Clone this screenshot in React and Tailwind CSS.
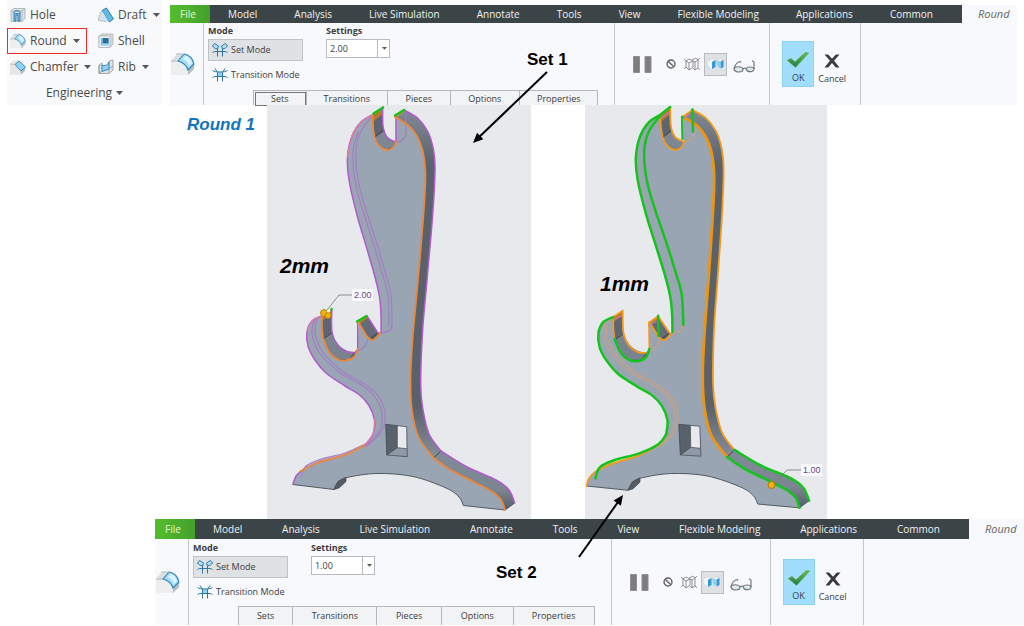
import { useId } from 'react';
import clsx from 'clsx';

const MENU = [
    'Model',
    'Analysis',
    'Live Simulation',
    'Annotate',
    'Tools',
    'View',
    'Flexible Modeling',
    'Applications',
    'Common',
];

const PANELS = ['Sets', 'Transitions', 'Pieces', 'Options', 'Properties'];

/* ---------- icons ---------- */

function Caret({ className = 'w-[7px]' }) {
    return (
        <svg viewBox="0 0 7 4" className={clsx('shrink-0', className)} aria-hidden="true">
            <path d="M0 0h7L3.5 4z" fill="#555" />
        </svg>
    );
}

function HoleIcon() {
    return (
        <svg viewBox="0 0 16 16" className="w-4 h-4 shrink-0" aria-hidden="true">
            <path d="M1 4l3-2.500h11v10l-3 3H1z" fill="#dfe3e6" stroke="#a3abb1" strokeWidth=".8" />
            <path d="M1 4h11v10.500M12 4l3-2.500" fill="none" stroke="#a3abb1" strokeWidth=".8" />
            <path d="M4 5.500c0-2 6-2 6 0V14H8V8H6v6H4z" fill="#7cc4ea" stroke="#2474a5" strokeWidth=".9" />
            <ellipse cx="7" cy="5.300" rx="3" ry="1.300" fill="#d9f1fc" stroke="#2474a5" strokeWidth=".8" />
        </svg>
    );
}

function RoundIcon({ className = 'w-4 h-4' }) {
    return (
        <svg viewBox="0 0 24 24" className={clsx('shrink-0', className)} aria-hidden="true">
            <path d="M0 9l6-7h7c5 1 9 5 10 10v5l-6 6v-5C16 13 12 10 8 9z" fill="#dcdfe2" />
            <path d="M0 9h7c5 1 9 5 10 9v5H0z" fill="#eceeef" />
            <path d="M17 18l6-6v5l-6 6z" fill="#b9bec2" />
            <path d="M7 9l6-7c5 1 9 5 10 10l-6 6c-1-4-5-8-10-9z" fill="#a5dcf8" stroke="#2a82b5" strokeWidth="1.100" />
            <path d="M12 7l3-3.500c3 1.500 5 4 6 7.500l-3 3c-1-3-3-5.500-6-7z" fill="#d9f3ff" />
            <path d="M0 9h7M5 2h8" stroke="#b4babe" strokeWidth="1" />
        </svg>
    );
}

function ChamferIcon() {
    return (
        <svg viewBox="0 0 16 16" className="w-4 h-4 shrink-0" aria-hidden="true">
            <path d="M0 5l4-3.500h4l7 7V12l-4 3.500H0z" fill="#e3e5e7" />
            <path d="M11 12l4-4v4l-4 3.500z" fill="#b5babd" />
            <path d="M5 5.500L9 2l6.500 6L11 12z" fill="#8ed2f5" stroke="#2a82b5" strokeWidth=".9" />
            <path d="M0 5l5 .5" stroke="#b0b6ba" strokeWidth=".8" />
        </svg>
    );
}

function DraftIcon() {
    return (
        <svg viewBox="0 0 16 16" className="w-4 h-4 shrink-0" aria-hidden="true">
            <path d="M0 13L3 5l4-2 4 9-3 2.500z" fill="#dfe3e6" stroke="#a3abb1" strokeWidth=".8" />
            <path d="M4 3.500L8.500 1l7 11-4.500 3z" fill="#62b9e8" stroke="#2474a5" strokeWidth=".9" />
            <path d="M4 3.500L11 15l-6-1.500z" fill="#bfe6f9" />
        </svg>
    );
}

function ShellIcon() {
    return (
        <svg viewBox="0 0 16 16" className="w-4 h-4 shrink-0" aria-hidden="true">
            <path d="M1 3l3-2h11v10l-3 3.500H1z" fill="#d3d7da" stroke="#b0b6ba" strokeWidth=".8" />
            <path d="M1 3h11v11.500H1z" fill="#eef0f1" stroke="#b0b6ba" strokeWidth=".8" />
            <path d="M3 5h7.500v7.500H3z" fill="#6db7df" />
            <path d="M5 5h5.500v5.500H5z" fill="#2b6d99" />
            <path d="M3 12.500l2-2h5.500v2z" fill="#9bd8f6" />
        </svg>
    );
}

function RibIcon() {
    return (
        <svg viewBox="0 0 16 16" className="w-4 h-4 shrink-0" aria-hidden="true">
            <path d="M1 6l3-2v6l7-1V2l4-1v10l-4 3.500H1z" fill="#dfe3e6" stroke="#8f999f" strokeWidth=".8" />
            <path d="M4 6c3 1.500 6 0 7-3v7l-7 2.500z" fill="#8ed2f5" stroke="#2a82b5" strokeWidth=".9" />
            <path d="M1 6v8.500L4 12M11 14.500V10l4-3" fill="none" stroke="#8f999f" strokeWidth=".8" />
        </svg>
    );
}

function SetModeIcon() {
    return (
        <svg viewBox="0 0 16 14" className="w-4 h-[14px] shrink-0" aria-hidden="true">
            <path d="M.5 3L2.500.500 6.500 3v4C3.500 6 1.500 5 .5 3zM15.500 3l-2-2.500-4 2.500v4c3-1 5-2 6-4z" fill="#b5e2f8" />
            <path
                d="M2.500.5l4 2.500M.5 3C1.500 4.500 3 5.500 5.500 6v7.500M13.500.5l-4 2.500M15.500 3c-1 1.500-2.500 2.500-5 3v7.500M2.500.5L.5 3M13.500.5l2 2.500M6.500 3L5.500 6M9.500 3l1 3M.5 9.500C2 8.300 3.500 8.500 5.500 8.500h5c2 0 3.500-.2 5 1"
                fill="none"
                stroke="#2b76a3"
                strokeWidth="1"
            />
        </svg>
    );
}

function TransitionModeIcon() {
    return (
        <svg viewBox="0 0 16 14" className="w-4 h-[14px] shrink-0" aria-hidden="true">
            <path d="M5.500 4h5v4.500h-5z" fill="#8fd2f4" />
            <path
                d="M.5 2.500C3 4.500 13 4.500 15.500 2.500M3 .5l2.500 4v9M13 .5l-2.500 4v9M.5 9.500C2 8.300 3.500 8.500 5.500 8.500h5c2 0 3.500-.2 5 1"
                fill="none"
                stroke="#2b76a3"
                strokeWidth="1"
            />
        </svg>
    );
}

function PauseIcon() {
    return (
        <svg viewBox="0 0 19 17" className="w-[19px] h-[17px]" aria-hidden="true">
            <path d="M.5.5h6v16h-6zM12 .5h6v16h-6z" fill="#7d7d7d" stroke="#8f8f8f" />
        </svg>
    );
}

function NoPreviewIcon() {
    return (
        <svg viewBox="0 0 10 10" className="w-[10px] h-[10px]" aria-hidden="true">
            <circle cx="5" cy="5" r="4" fill="none" stroke="#5f5f5f" strokeWidth="1.300" />
            <path d="M2.200 2.200l5.600 5.600" stroke="#5f5f5f" strokeWidth="1.300" />
        </svg>
    );
}

function UnattachedIcon() {
    return (
        <svg viewBox="0 0 16 14" className="w-4 h-[14px]" aria-hidden="true">
            <path
                d="M2 4l3-2 4 2v6l-4 3-3-3zM2 4l3 2 4-2M5 6v7M8 3l4-2 2 2v8l-3 2-2-2M9 4l2 1 3-2M11 5v8M0 2l2 2M0 12l2-2M14 3l2-2M14 11l2 2"
                fill="none"
                stroke="#777"
                strokeWidth=".8"
            />
        </svg>
    );
}

function AttachedIcon() {
    return (
        <svg viewBox="0 0 16 12" className="w-4 h-3" aria-hidden="true">
            <path d="M0 2.500L4 1l3.500 1L4 4zM8.500 2.500L12 1l3.500 1-3 1.500z" fill="#fff" stroke="#b4c6d1" strokeWidth=".4" />
            <path d="M0 2.500L4 4v7L.5 8z" fill="#f4f8fa" />
            <path d="M4 4l3.500-2v7L4 11zM12.500 3.500L15.500 2v7l-3 1.500z" fill="#2f9bd8" />
            <path d="M8.500 2.500l4 1v7L9 8z" fill="#8bd0f3" />
        </svg>
    );
}

function GlassesIcon() {
    return (
        <svg viewBox="0 0 22 13" className="w-[22px] h-[13px]" aria-hidden="true">
            <g fill="#dceaf1" stroke="#777" strokeWidth="1.200">
                <path d="M1 9c0-3 8-3 9 0 0 4-8 4-9 0zM13 8.500c1-2 7-2 8 0 0 4-7 4.500-8 0z" />
                <path d="M10 9c1-1 2-1 3-.5M1 9C2 5 4 2 7 1.500l1 1M21 9V2l-2-1.200" fill="none" />
            </g>
        </svg>
    );
}

function CheckIcon() {
    const id = useId();
    return (
        <svg viewBox="0 0 22 16" className="w-[22px] h-4" aria-hidden="true">
            <defs>
                <linearGradient id={id} x1="0" y1="0" x2="0" y2="1">
                    <stop offset="0" stopColor="#6fc23c" />
                    <stop offset="1" stopColor="#1b7a4b" />
                </linearGradient>
            </defs>
            <path d="M.5 8.500L4 6.500 8 10 18 .8l3.500.2L8.500 15.300z" fill={`url(#${id})`} stroke="#3f8f3a" strokeWidth=".6" />
        </svg>
    );
}

function CrossIcon() {
    return (
        <svg viewBox="0 0 16 14" className="w-4 h-[14px]" aria-hidden="true">
            <path d="M.5.5h3.700L8 4.800 11.800.5h3.700L10 6.800l5.500 6.700h-3.700L8 9l-3.800 4.500H.5L6 6.800z" fill="#3a3a3a" />
        </svg>
    );
}

/* ---------- toolbox ---------- */

function Tool({ icon, label, caret, active }) {
    return (
        <button
            type="button"
            className={clsx(
                'flex h-[26px] items-center gap-1 border px-[2px] whitespace-nowrap',
                active ? 'border-[#ee2b2b]' : 'border-transparent'
            )}
        >
            {icon}
            <span>{label}</span>
            {caret && <Caret className="ml-[2px] w-[7px]" />}
        </button>
    );
}

function Toolbox() {
    return (
        <section className="w-[155px] shrink-0 bg-[#f7f9fb] pt-[2px] text-[12px] leading-4 text-[#4a4a4a]">
            <div className="flex gap-2">
                <div className="flex w-[80px] flex-col items-stretch">
                    <Tool icon={<HoleIcon />} label="Hole" />
                    <Tool icon={<RoundIcon />} label="Round" caret active />
                    <Tool icon={<ChamferIcon />} label="Chamfer" caret />
                </div>
                <div className="flex flex-col items-start">
                    <Tool icon={<DraftIcon />} label="Draft" caret />
                    <Tool icon={<ShellIcon />} label="Shell" />
                    <Tool icon={<RibIcon />} label="Rib" caret />
                </div>
            </div>
            <button type="button" className="mx-auto flex h-[25px] items-center gap-1">
                Engineering
                <Caret />
            </button>
        </section>
    );
}

/* ---------- ribbon ---------- */

function ModeButton({ icon, label, active }) {
    return (
        <button
            type="button"
            className={clsx(
                'flex h-[22px] w-full items-center gap-[3px] border px-[3px] whitespace-nowrap',
                active ? 'border-[#bfc3c6] bg-[#dfe2e4]' : 'border-transparent'
            )}
        >
            {icon}
            {label}
        </button>
    );
}

function Ribbon({ id, radius, focused, tall, className }) {
    return (
        <section className={clsx('bg-[#f8f9fc] text-[9px] leading-4 text-[#3c3c3c]', className)}>
            <nav className={clsx('flex items-stretch text-[10px]', tall ? 'h-5' : 'h-[18px]')}>
                <button type="button" className="w-10 bg-linear-to-r from-[#55bd2c] to-[#43a02c] pr-1 text-[#e8f5d8]">
                    File
                </button>
                <div className="flex flex-1 items-center justify-between bg-[#3b4446] pr-[29px] pl-[18px] text-[#f1f3f3]">
                    {MENU.map((item) => (
                        <button key={item} type="button" className="whitespace-nowrap">
                            {item}
                        </button>
                    ))}
                </div>
                <button type="button" className="w-[55px] pl-4 text-left text-[11px] text-[#666] italic">
                    Round
                </button>
            </nav>

            <div className="grid grid-cols-[34px_412fr_155fr_91fr_156fr] divide-x divide-[#c6c9cc]">
                <div className="flex items-center pl-px">
                    <RoundIcon className="h-6 w-6" />
                </div>

                <div className={clsx('flex flex-col', tall && 'pt-px')}>
                    <div className="flex gap-[23px] pl-1">
                        <div className="w-[95px]">
                            <h2 className="font-bold">Mode</h2>
                            <ModeButton icon={<SetModeIcon />} label="Set Mode" active />
                            <div className="mt-[3px]">
                                <ModeButton icon={<TransitionModeIcon />} label="Transition Mode" />
                            </div>
                        </div>
                        <div>
                            <label htmlFor={id} className="block font-bold">
                                Settings
                            </label>
                            <div className="relative w-16">
                                <select
                                    id={id}
                                    defaultValue={radius}
                                    className="block h-[19px] w-full appearance-none border border-[#b8bbbd] bg-white px-[3px] leading-4"
                                >
                                    <option>1.00</option>
                                    <option>2.00</option>
                                </select>
                                <span className="pointer-events-none absolute inset-y-0 right-0 flex w-[13px] items-center justify-center border-l border-[#b8bbbd]">
                                    <Caret className="w-[5px]" />
                                </span>
                            </div>
                        </div>
                    </div>
                    <div
                        className={clsx(
                            'mr-4 ml-[49px] grid grid-cols-[53fr_82fr_63fr_70fr_78fr] divide-x divide-[#b4b7ba] border border-b-0 border-[#b4b7ba] bg-[#f1f3f4]',
                            tall ? 'mt-[3px] h-[19px]' : 'mt-1 h-[15px]'
                        )}
                    >
                        {PANELS.map((name) => (
                            <button
                                key={name}
                                type="button"
                                className={clsx(
                                    'flex items-center justify-center',
                                    focused === name && 'outline outline-1 -outline-offset-2 outline-[#777]'
                                )}
                            >
                                {name}
                            </button>
                        ))}
                    </div>
                </div>

                <div className="flex items-center pl-[18px]">
                    <button type="button" aria-label="Pause">
                        <PauseIcon />
                    </button>
                    <button type="button" aria-label="No preview" className="ml-[14px]">
                        <NoPreviewIcon />
                    </button>
                    <button type="button" aria-label="Unattached preview" className="ml-2">
                        <UnattachedIcon />
                    </button>
                    <button
                        type="button"
                        aria-label="Attached preview"
                        className="ml-1 flex h-[23px] w-[23px] items-center justify-center border border-[#b9bcbf] bg-[#dfe2e4]"
                    >
                        <AttachedIcon />
                    </button>
                    <button type="button" aria-label="Verify" className="mt-1 ml-[6px]">
                        <GlassesIcon />
                    </button>
                </div>

                <div className="flex items-center gap-1 pl-3">
                    <button
                        type="button"
                        className="flex h-[46px] w-8 flex-col items-center justify-end gap-[2px] border border-[#8ad3f7] bg-[#a1defe]"
                    >
                        <CheckIcon />
                        OK
                    </button>
                    <button type="button" className="flex h-[46px] flex-col items-center justify-end gap-[3px]">
                        <CrossIcon />
                        Cancel
                    </button>
                </div>

                <div />
            </div>
        </section>
    );
}

/* ---------- model geometry ---------- */

// Catmull-Rom through the points, written as cubic segments.
function curve(pts, join = 'M') {
    let d = `${join}${pts[0][0]} ${pts[0][1]}`;
    for (let i = 0; i < pts.length - 1; i++) {
        const a = pts[i - 1] || pts[i];
        const b = pts[i];
        const c = pts[i + 1];
        const e = pts[i + 2] || c;
        d += `C${b[0] + (c[0] - a[0]) / 6} ${b[1] + (c[1] - a[1]) / 6} ${c[0] - (e[0] - b[0]) / 6} ${c[1] - (e[1] - b[1]) / 6} ${c[0]} ${c[1]}`;
    }
    return d;
}

const rev = (pts) => [...pts].reverse();

const NECK_LEFT = [[372, 115], [361, 122], [352, 136], [347.500, 157], [349, 180], [357, 215], [367, 249], [375, 277], [379.500, 297], [381, 315], [381, 332]];
const NECK_INNER = [[372, 116], [361, 131], [356, 150], [358, 180], [366, 210], [376, 241], [386, 275], [391, 295], [392, 325]];
const NECK_INNER_END = [[392, 325], [389, 331], [381, 333]];
const SLOT = [[372.500, 116], [373.500, 131], [376, 141], [381, 147.500], [388, 150], [393.500, 147], [396, 141.500]];
const SLOT_BACK = [[382.700, 107], [383, 126], [387, 137], [395.500, 142]];
const PRONG_FRONT = [[358.500, 322.500], [363, 330], [367.500, 337], [373, 340], [380.500, 333]];
const HOOK_TOP = [[322, 317], [322, 328], [323, 338]];
const HOOK_BOTTOM = [[323, 338], [329, 352], [337, 359], [346, 360.500], [354, 357], [357.700, 348.500]];
const HOOK_BACK = [[331.700, 310], [332, 332], [337.500, 345], [346, 351.500], [354, 352.500]];
const HOOK_OUTER = [[322, 316], [312, 321], [307, 332], [308, 346], [315, 360], [326, 373], [345, 386], [359, 394.500], [369, 405.500], [374.500, 420], [373, 434], [365, 445]];
const HOOK_INNER = [[318, 317], [315, 332], [322, 351], [342, 371], [364, 383.500], [378, 396], [385, 413], [382, 431], [367, 446]];
const FOOT_FRONT = [[365, 445], [345, 455], [317, 463], [300, 471.500], [294, 479], [292.700, 484.500]];
const FOOT_BACK = [[365, 444], [345, 453], [321, 459], [306, 466], [301.500, 477]];
const ARCH = [[334, 489.500], [338, 482], [347, 477.500], [377, 473.500], [413, 476.500], [446, 488], [459, 497], [463.300, 505.500]];
const BACK_FRONT = [[396, 117.500], [411, 128], [421, 145], [425.300, 170], [424.300, 203], [418.700, 272], [412.500, 340], [410.500, 380], [412, 411], [418.500, 437], [433.500, 458]];
const LEG_FRONT = [[433.500, 458], [449, 469], [474, 482], [491, 491], [501, 499.500], [505, 510]];
const BACK_OUTER = [[404, 110], [418, 118.500], [428, 132], [433.500, 150], [435, 170], [432.500, 217], [427, 280], [422.500, 332], [420.700, 385], [423, 410], [429, 434], [441, 451]];
const LEG_OUTER = [[441, 451], [467, 467], [496, 480], [509, 490], [514.700, 503]];

const FACE =
    curve(NECK_LEFT) +
    curve(rev(PRONG_FRONT), 'L') +
    curve(rev(HOOK_BOTTOM), 'L') +
    curve(rev(HOOK_TOP), 'L') +
    curve(HOOK_OUTER, 'L') +
    curve(FOOT_FRONT, 'L') +
    curve(ARCH, 'L') +
    curve(rev(LEG_FRONT), 'L') +
    curve(rev(BACK_FRONT), 'L') +
    curve(rev(SLOT), 'L') +
    'Z';

const SIDE =
    curve(BACK_FRONT) + curve(LEG_FRONT, 'L') + curve(rev(LEG_OUTER), 'L') + curve(rev(BACK_OUTER), 'L') + 'Z';

function Solid() {
    const id = useId();
    return (
        <g>
            <defs>
                <linearGradient id={id} gradientUnits="userSpaceOnUse" x1="0" y1="110" x2="0" y2="510">
                    <stop offset="0" stopColor="#808a96" />
                    <stop offset=".14" stopColor="#59616b" />
                    <stop offset=".74" stopColor="#59616b" />
                    <stop offset=".86" stopColor="#818b97" />
                    <stop offset=".95" stopColor="#7b8591" />
                    <stop offset="1" stopColor="#555c66" />
                </linearGradient>
            </defs>
            <path d={SIDE} fill={`url(#${id})`} />
            <path d={FACE} fill="#9aa5b4" />
            {/* inner walls of the cut-outs */}
            <path d={curve(SLOT) + curve(rev(SLOT_BACK), 'L') + 'Z'} fill="#5d6570" />
            <path d="M375 137l9-6c2 6 6 10 11 11l-2 5-6 2c-6-1-10-5-12-12z" fill="#7d8793" />
            <path d={curve([...HOOK_TOP, ...HOOK_BOTTOM.slice(1)]) + curve(rev(HOOK_BACK), 'L') + 'Z'} fill="#5d6570" />
            <path d="M323 339l9-7c3 12 12 20 22 20l-5 7-12 0c-7-4-12-10-14-20z" fill="#79838f" />
            <path d={curve(PRONG_FRONT) + 'L378 333L367 316Z'} fill="#626b76" />
            <path d="M372 115l10.700-8v7l-10 8zM358.500 322l8.500-6 1 2-8 6zM322 316l9.500-6v5l-9.500 6z" fill="#b47a2b" />
            <path d="M375 137l8.500-6.500M323 339l9-6M371 338l7-5M433.500 458l7.500-7" stroke="#2f353b" strokeWidth=".8" />
            <path d="M334 489.500l4-8 8-4v4l-7 6.500z" fill="#555d67" stroke="#333" strokeWidth=".6" />
            {/* window */}
            <path d="M385.700 424.300l21 2.400.6 30-20.600-1.700z" fill="#8f9aa8" />
            <path d="M385.700 424.300l11.600 1.400v22l-10.600 7.300z" fill="#59616b" />
            <path d="M397.300 425.700l9.400 1v22l-9.400-1z" fill="#e8e9ed" />
            <path d="M385.700 424.300l21 2.400.6 30-20.600-1.700zM397.300 425.700v22l9.400 1M397.300 447.700l-10.600 7.300" fill="none" stroke="#3d444c" strokeWidth=".7" />
            <path d={'M292.700 484.500' + curve(ARCH, 'L') + 'L505 510L514.700 503'} fill="none" stroke="#454d56" strokeWidth=".9" />
        </g>
    );
}

function Lines({ paths, color, width = 1.500, opacity = 1 }) {
    return (
        <g fill="none" stroke={color} strokeWidth={width} opacity={opacity} strokeLinecap="round">
            {paths.map((d, i) => (
                <path key={i} d={d} />
            ))}
        </g>
    );
}

const shift = (pts, dx, dy) => pts.map(([x, y]) => [x + dx, y + dy]);

function Callout({ x, y, tip, elbow, children }) {
    return (
        <g>
            <path d={`M${tip}L${elbow}L${x} ${y}`} fill="none" stroke="#777" strokeWidth=".8" />
            <rect x={x} y={y - 6} width="21" height="12" fill="#fafafc" />
            <text x={x + 2} y={y + 3} fontSize="9" fill="#6a4a80">
                {children}
            </text>
        </g>
    );
}

function Arrow({ x1, y1, x2, y2 }) {
    const angle = (Math.atan2(y2 - y1, x2 - x1) * 180) / Math.PI;
    return (
        <g>
            <path d={`M${x1} ${y1}L${x2 + (x1 - x2) * 0.08} ${y2 + (y1 - y2) * 0.08}`} stroke="#000" strokeWidth="2" />
            <path d="M0 0l-10-4.500v9z" transform={`translate(${x2} ${y2}) rotate(${angle})`} />
        </g>
    );
}

const FIGURE = 'block w-full overflow-visible pointer-events-none font-["Liberation_Sans",sans-serif]';

function SetOneFigure() {
    return (
        <figure className="bg-[#e8e9ed]">
            <svg viewBox="267 105 264 414" className={FIGURE}>
                <Solid />
                <Lines
                    color="#a678c6"
                    width={1.200}
                    opacity={0.85}
                    paths={[
                        curve(NECK_INNER),
                        curve(shift(NECK_INNER, -3, 1).slice(1)),
                        curve(NECK_INNER_END),
                        curve(HOOK_INNER),
                        curve(shift(HOOK_INNER, -3, 1)),
                        'M396 142c6 0 10-4 10-10V112',
                        'M358 351c6-2 9-7 10-13',
                        curve(FOOT_BACK),
                    ]}
                />
                <path d={curve(FOOT_BACK.slice(0, 4)) + curve(rev(FOOT_FRONT.slice(0, 4)), 'L') + 'Z'} fill="#9673b8" opacity=".6" />
                <Lines
                    color="#b05acb"
                    paths={[
                        curve(NECK_LEFT),
                        curve(HOOK_OUTER),
                        curve(BACK_OUTER),
                        curve(LEG_OUTER),
                        curve(SLOT_BACK),
                        curve(HOOK_BACK),
                        'M396 117v25',
                        'M357.700 322v26',
                        'M367 316l11 17h3',
                        'M301 471l-5 5-3 8',
                    ]}
                />
                <Lines
                    color="#ef8637"
                    width={1.800}
                    paths={[
                        curve(SLOT),
                        curve(BACK_FRONT),
                        curve(LEG_FRONT),
                        curve(HOOK_TOP),
                        curve(HOOK_BOTTOM),
                        curve(PRONG_FRONT),
                        curve(FOOT_FRONT.slice(0, 4)),
                        'M395 117l9-6',
                    ]}
                />
                <Lines color="#de7fa0" width={1.200} paths={[curve(NECK_LEFT.slice(0, 4)), curve(HOOK_OUTER.slice(0, 3)), curve(HOOK_OUTER.slice(-3))]} />
                <Lines color="#12c41c" width={2.400} paths={['M373.500 113.500l9.500-6', 'M395 115.500l9-5.500', 'M357 321.500l9.500-5.500', 'M331.500 309v.5']} />
                <Callout x={352} y={295} tip="327 310" elbow="339 295">
                    2.00
                </Callout>
                <g fill="#f2b20c" stroke="#a8780a" strokeWidth=".8">
                    <circle cx="324" cy="313" r="3.500" />
                    <circle cx="328" cy="315.500" r="3" />
                </g>
                <circle cx="328.500" cy="311" r="1.600" fill="#fff" />
                <text x="280" y="273" fontSize="21" fontWeight="bold" fontStyle="italic">
                    2mm
                </text>
                <text x="527" y="65" fontSize="17" fontWeight="bold">
                    Set 1
                </text>
                <Arrow x1={547} y1={72} x2={473} y2={143} />
            </svg>
        </figure>
    );
}

function SetTwoFigure() {
    return (
        <figure className="bg-[#e8e9ed]">
            <svg viewBox="585 105 242 414" className={FIGURE}>
                {/* same solid, seen one degree further round */}
                <g transform="translate(285.700 6.700) rotate(-1)">
                    <Solid />
                    <Lines
                        color="#cf9f78"
                        width={1}
                        paths={[
                            curve(NECK_INNER_END),
                            curve(HOOK_INNER),
                            curve(shift(HOOK_INNER, -3, 1)),
                            'M396 142c6 0 10-4 10-10',
                            'M358 351c6-2 9-7 10-13',
                        ]}
                    />
                    <Lines
                        color="#f39a1b"
                        width={1.800}
                        paths={[
                            curve(SLOT),
                            curve(SLOT_BACK),
                            curve(BACK_OUTER),
                            curve(HOOK_TOP),
                            curve(HOOK_BACK),
                            curve(PRONG_FRONT),
                            curve(FOOT_FRONT),
                            'M322 316l9.500-6',
                            'M357.700 322v26',
                            'M358 322l9-6 11 17',
                            'M395 117l9-6',
                        ]}
                    />
                    <Lines color="#ee9410" width={2.800} paths={[curve(BACK_FRONT)]} />
                    <Lines color="#c578b8" width={1.200} paths={['M373 118l9-6', 'M358 325l7-4', 'M322 319l8-4', 'M395 119l6-4']} />
                    <Lines
                        color="#12c41c"
                        width={2.500}
                        paths={[
                            'M372 115l10.700-8',
                            curve(NECK_LEFT),
                            curve(NECK_INNER),
                            curve(HOOK_OUTER.slice(0, -1)),
                            curve([[373, 434], [365, 444], [345, 453], [321, 459], [306, 466], [301.500, 477]]),
                            curve(HOOK_BOTTOM),
                            curve(LEG_FRONT),
                            curve(LEG_OUTER),
                            'M394.500 117v22',
                            'M405 110v22',
                            'M367 315.500v20',
                        ]}
                    />
                </g>
                <Callout x={801} y={470} tip="772 485" elbow="787 470">
                    1.00
                </Callout>
                <circle cx="771.500" cy="485" r="3.500" fill="#f2b20c" stroke="#a8780a" />
                <text x="600" y="291" fontSize="21" fontWeight="bold" fontStyle="italic">
                    1mm
                </text>
                <text x="496" y="578" fontSize="17" fontWeight="bold">
                    Set 2
                </text>
                <Arrow x1={579} y1={557} x2={623} y2={495} />
            </svg>
        </figure>
    );
}

export default function App() {
    return (
        <main className='bg-white font-["Open_Sans","Noto_Sans",sans-serif]'>
            <header className="flex gap-2 px-[7px]">
                <Toolbox />
                <Ribbon id="radius-set-1" radius="2.00" focused="Sets" className="mt-[5px] min-w-0 flex-1" />
            </header>

            <div className="relative z-10 grid grid-cols-[267fr_264fr_54fr_242fr_197fr]">
                <h1 className='pt-2 pr-3 text-right font-["Liberation_Sans",sans-serif] text-[17px] leading-6 font-bold text-[#0f75c0] italic'>
                    Round 1
                </h1>
                <SetOneFigure />
                <div />
                <SetTwoFigure />
            </div>

            <Ribbon id="radius-set-2" radius="1.00" tall className="ml-[155px]" />
        </main>
    );
}
